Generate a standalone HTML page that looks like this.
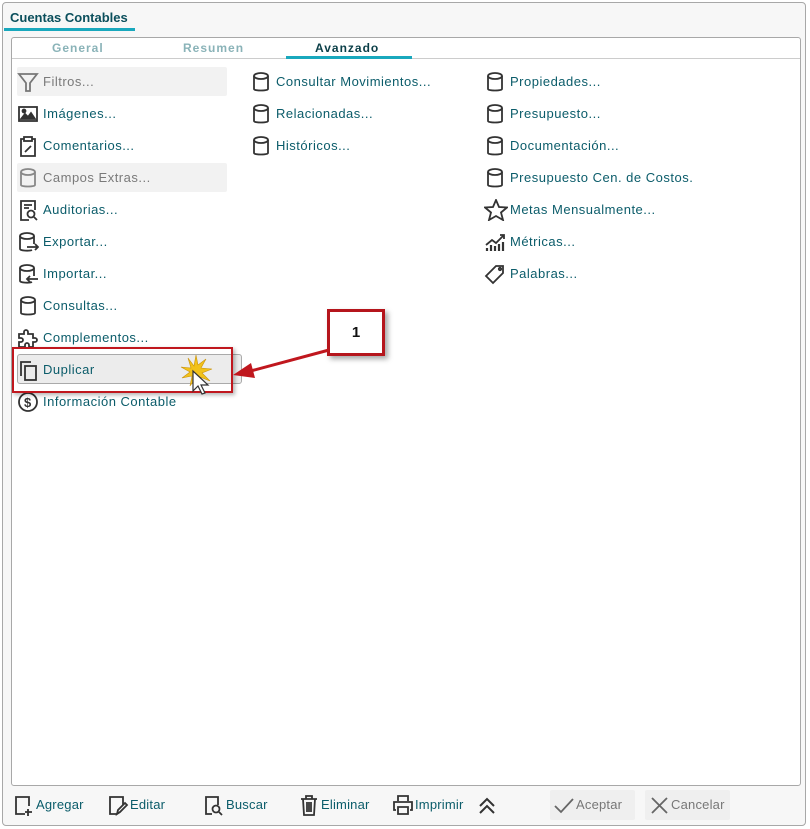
<!DOCTYPE html>
<html><head><meta charset="utf-8"><style>
*{margin:0;padding:0;box-sizing:border-box}
body{width:810px;height:829px;background:#fff;font-family:"Liberation Sans",sans-serif;font-size:13px;color:#0b5c6a;position:relative;overflow:hidden}
.a{position:absolute}
.frame{left:2px;top:2px;width:804px;height:824px;border:1px solid #a8a8a8;border-radius:4px;background:#f7f7f7}
.inner{left:11px;top:37px;width:790px;height:749px;border:1px solid #a8a8a8;border-radius:3px;background:#fff}
.it{position:absolute;height:30px;line-height:32px;white-space:nowrap;letter-spacing:0.5px}
.it svg{position:absolute;left:0;top:5px}
.it span{position:absolute;left:26px}
.g{color:#7a7a7a}
svg{fill:none;stroke:#333;stroke-width:1.8}
.tb{position:absolute;top:793px;height:24px;line-height:24px;white-space:nowrap;letter-spacing:0.2px}
.tb svg{position:absolute;left:0;top:1px}
.tb span{position:absolute;left:23px}
</style></head><body>
<div class="a frame"></div>
<div class="a" style="left:10px;top:10px;font-weight:bold;color:#0b4f5c;font-size:13px">Cuentas Contables</div>
<div class="a" style="left:4px;top:28px;width:131px;height:3px;background:#19a8bd"></div>
<div class="a inner"></div>
<div class="a" style="left:12px;top:58px;width:788px;height:1px;background:#ccc"></div>
<div class="a" style="left:52px;top:41px;font-weight:bold;color:#8ab3b8;font-size:12px;letter-spacing:1px">General</div>
<div class="a" style="left:183px;top:41px;font-weight:bold;color:#8ab3b8;font-size:12px;letter-spacing:1px">Resumen</div>
<div class="a" style="left:315px;top:41px;font-weight:bold;color:#0b3f48;font-size:12px;letter-spacing:1px">Avanzado</div>
<div class="a" style="left:286px;top:56px;width:126px;height:3px;background:#19a8bd"></div>

<div class="a" style="left:17px;top:67px;width:210px;height:29px;background:#f2f2f2;border-radius:2px"></div>
<div class="a" style="left:17px;top:163px;width:210px;height:29px;background:#f2f2f2;border-radius:2px"></div>

<!-- col1 -->
<div class="it" style="left:17px;top:66px"><svg width="22" height="22" style="stroke:#777"><path d="M2 3h18l-7 9v8h-4v-8z"/></svg><span class="g">Filtros...</span></div>
<div class="it" style="left:17px;top:98px"><svg width="22" height="22"><rect x="2" y="4" width="18" height="14"/><path d="M4 16l4-5 3 3 3-4 4 6z" fill="#333"/><circle cx="7" cy="8" r="1.5" fill="#333"/></svg><span>Imágenes...</span></div>
<div class="it" style="left:17px;top:130px"><svg width="22" height="22"><path d="M7 4H4v17h14V4h-3"/><rect x="7" y="2" width="8" height="4"/><path d="M8 17l6-6"/></svg><span>Comentarios...</span></div>
<div class="it" style="left:17px;top:162px"><svg width="22" height="22" style="stroke:#888"><ellipse cx="11" cy="5" rx="7" ry="3"/><path d="M4 5v13c0 2 14 2 14 0V5"/></svg><span class="g">Campos Extras...</span></div>
<div class="it" style="left:17px;top:194px"><svg width="22" height="22"><path d="M12 21H4V2h14v9"/><path d="M7 6h8M7 9h5"/><circle cx="14" cy="15" r="3.5"/><path d="M17 18l3 3"/></svg><span>Auditorias...</span></div>
<div class="it" style="left:17px;top:226px"><svg width="22" height="22"><ellipse cx="10" cy="5" rx="7" ry="3"/><path d="M3 5v13c0 2 10 2 12 1M17 5v8M10 16h11M18 13l3 3-3 3"/></svg><span>Exportar...</span></div>
<div class="it" style="left:17px;top:258px"><svg width="22" height="22"><ellipse cx="10" cy="5" rx="7" ry="3"/><path d="M3 5v13c0 2 10 2 12 1M17 5v8M10 16h11M13 13l-3 3 3 3"/></svg><span>Importar...</span></div>
<div class="it" style="left:17px;top:290px"><svg width="22" height="22"><ellipse cx="11" cy="5" rx="7" ry="3"/><path d="M4 5v13c0 2 14 2 14 0V5"/></svg><span>Consultas...</span></div>
<div class="it" style="left:17px;top:322px"><svg width="22" height="22"><path d="M2 20v-5h2a2 2 0 0 0 0-4H2V7h5V5a2 2 0 0 1 4 0v2h5v4h2a2 2 0 0 1 0 4h-2v5h-4v-2a2 2 0 0 0-4 0v2z"/></svg><span>Complementos...</span></div>
<div class="a" style="left:17px;top:354px;width:225px;height:30px;background:#ececec;border:1px solid #aaa;border-radius:3px"></div>
<div class="it" style="left:17px;top:354px"><svg width="22" height="22"><path d="M4 17V3h10"/><rect x="8" y="7" width="11" height="14"/></svg><span>Duplicar</span></div>
<div class="it" style="left:17px;top:386px"><svg width="22" height="22"><circle cx="11" cy="11" r="9"/><text x="7" y="16" font-size="13" fill="#333" stroke="none" font-family="Liberation Sans" font-weight="bold">$</text></svg><span>Información Contable</span></div>

<!-- col2 -->
<div class="it" style="left:250px;top:66px"><svg width="22" height="22"><ellipse cx="11" cy="5" rx="7" ry="3"/><path d="M4 5v13c0 2 14 2 14 0V5"/></svg><span>Consultar Movimientos...</span></div>
<div class="it" style="left:250px;top:98px"><svg width="22" height="22"><ellipse cx="11" cy="5" rx="7" ry="3"/><path d="M4 5v13c0 2 14 2 14 0V5"/></svg><span>Relacionadas...</span></div>
<div class="it" style="left:250px;top:130px"><svg width="22" height="22"><ellipse cx="11" cy="5" rx="7" ry="3"/><path d="M4 5v13c0 2 14 2 14 0V5"/></svg><span>Históricos...</span></div>

<!-- col3 -->
<div class="it" style="left:484px;top:66px"><svg width="22" height="22"><ellipse cx="11" cy="5" rx="7" ry="3"/><path d="M4 5v13c0 2 14 2 14 0V5"/></svg><span>Propiedades...</span></div>
<div class="it" style="left:484px;top:98px"><svg width="22" height="22"><ellipse cx="11" cy="5" rx="7" ry="3"/><path d="M4 5v13c0 2 14 2 14 0V5"/></svg><span>Presupuesto...</span></div>
<div class="it" style="left:484px;top:130px"><svg width="22" height="22"><ellipse cx="11" cy="5" rx="7" ry="3"/><path d="M4 5v13c0 2 14 2 14 0V5"/></svg><span>Documentación...</span></div>
<div class="it" style="left:484px;top:162px"><svg width="22" height="22"><ellipse cx="11" cy="5" rx="7" ry="3"/><path d="M4 5v13c0 2 14 2 14 0V5"/></svg><span>Presupuesto Cen. de Costos.</span></div>
<div class="it" style="left:484px;top:194px"><svg width="24" height="22"><path d="M12 1l3 7 8 .5-6 5 2 7.5-7-4-7 4 2-7.5-6-5 8-.5z"/></svg><span>Metas Mensualmente...</span></div>
<div class="it" style="left:484px;top:226px"><svg width="22" height="22"><path d="M2 14l6-5 4 3 8-8M16 4h4v4"/><path d="M3 20v-3M7 20v-6M11 20v-5M15 20v-7M19 20v-9" stroke-width="2.2"/></svg><span>Métricas...</span></div>
<div class="it" style="left:484px;top:258px"><svg width="22" height="22"><path d="M12 3h7v7L9 20l-7-7z"/><circle cx="16" cy="6" r="1.2"/></svg><span>Palabras...</span></div>

<!-- annotation -->
<div class="a" style="left:12px;top:347px;width:221px;height:46px;border:2px solid #c0171e;box-shadow:2px 2px 4px rgba(0,0,0,.3)"></div>
<div class="a" style="left:327px;top:309px;width:58px;height:47px;border:3px solid #b5151c;background:#fff;box-shadow:3px 3px 5px rgba(0,0,0,.35);text-align:center;line-height:41px;font-weight:bold;font-size:15px;color:#111">1</div>
<svg class="a" style="left:225px;top:340px;stroke:none" width="110" height="45"><path d="M104 10L22 32" stroke="#c0171e" stroke-width="3"/><path d="M8 35l18-12 4 15z" fill="#c0171e"/></svg>
<svg class="a" style="left:178px;top:355px;stroke:none" width="40" height="42"><path d="M18 0l2 10 8-6-5 9 11 1-10 4 8 8-10-4 1 11-5-10-6 8 2-10-10 2 8-6-9-5 10 1-3-10 6 8z" fill="#f2c21a" stroke="#c9920c" stroke-width=".6"/><path d="M15 16v20l5-5 4 8 3-1-4-8h7z" fill="#fff" stroke="#333" stroke-width="1.2"/></svg>

<!-- toolbar -->
<div class="tb" style="left:13px"><svg width="22" height="22"><path d="M12 20H3V3h13v9M15 15v7M12 18h7"/></svg><span>Agregar</span></div>
<div class="tb" style="left:107px"><svg width="22" height="22"><path d="M10 20H3V3h13v8M10 20l1-4 7-7 2 2-7 7z"/></svg><span>Editar</span></div>
<div class="tb" style="left:203px"><svg width="22" height="22"><path d="M9 20H3V3h12v8"/><circle cx="13" cy="15" r="3.5"/><path d="M16 18l3 3"/></svg><span>Buscar</span></div>
<div class="tb" style="left:298px"><svg width="22" height="22"><path d="M3 5h16M8 5V2h6v3M5 5l1 16h10l1-16M9 8v10M11 8v10M13 8v10"/></svg><span>Eliminar</span></div>
<div class="tb" style="left:392px"><svg width="22" height="22"><path d="M6 7V2h10v5M4 16H2V8h18v8h-2M6 13h10v7H6z"/></svg><span>Imprimir</span></div>
<svg class="a" style="left:476px;top:795px" width="22" height="22"><path d="M4 11l7-7 7 7M4 18l7-7 7 7" stroke-width="2"/></svg>
<div class="a" style="left:550px;top:790px;width:85px;height:30px;background:#efefef;border-radius:2px"></div>
<div class="a" style="left:645px;top:790px;width:85px;height:30px;background:#efefef;border-radius:2px"></div>
<div class="tb" style="left:553px;color:#777"><svg width="22" height="22" style="stroke:#666"><path d="M2 12l6 6 12-13"/></svg><span>Aceptar</span></div>
<div class="tb" style="left:648px;color:#777"><svg width="22" height="22" style="stroke:#666"><path d="M4 4l15 15M19 4L4 19"/></svg><span>Cancelar</span></div>
</body></html>
